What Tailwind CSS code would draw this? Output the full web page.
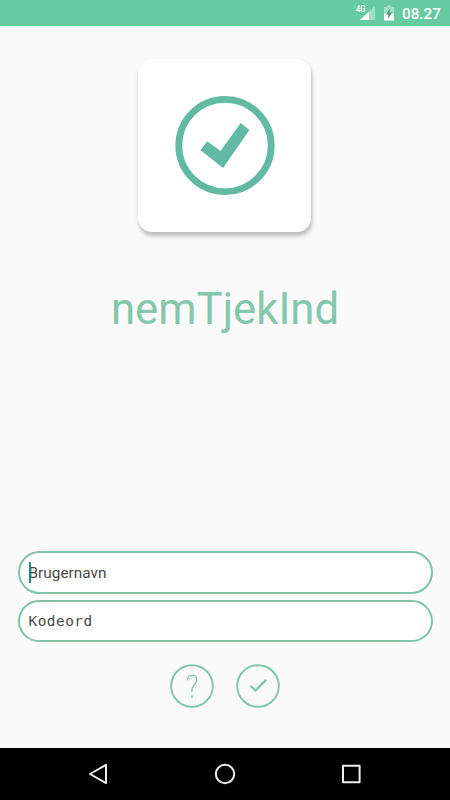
<!DOCTYPE html>
<html lang="da">
<head>
<meta charset="utf-8">
<title>nemTjekInd</title>
<script src="https://cdn.jsdelivr.net/npm/@tailwindcss/browser@4"></script>
</head>
<body class="bg-[#fafafa] font-['Roboto',sans-serif]">
<div class="flex h-[800px] w-[450px] flex-col overflow-hidden">
  <header class="flex h-[26px] shrink-0 justify-end bg-[#66cba2] pr-[9px]">
    <svg class="h-[26px] w-[45px]" viewBox="0 0 45 26">
      <path d="M20 6V20H5Z" fill="#fff" fill-opacity=".38"/>
      <path d="M14 11.5V20H5Z" fill="#fff"/>
      <text x="1" y="11.6" font-size="8.2" font-weight="500" fill="#fff" textLength="9.5" lengthAdjust="spacingAndGlyphs">4G</text>
      <path d="M32 5.5h4V7h3v6.5H29V7h3Z" fill="#fff" fill-opacity=".38"/>
      <path d="M29 13.5h10V20.5H29Z" fill="#fff"/>
      <path d="M34.8 8.2V12.6H37L33.3 19V14.6H31.2Z" fill="#4b9d7c"/>
    </svg>
    <span class="ml-[2px] flex h-[29px] w-[39px] items-center justify-end text-[15.3px] font-medium whitespace-nowrap text-white">08.27</span>
  </header>

  <main class="flex h-[722px] shrink-0 flex-col items-center">
    <div class="mt-[33px] ml-[-1px] flex h-[173px] w-[173px] shrink-0 items-center justify-center rounded-[14px] bg-[#fefefe] shadow-[1px_4px_4px_rgba(0,0,0,0.25),0_0_2px_rgba(0,0,0,0.06)]">
      <svg class="ml-[1.5px] size-[102px] blur-[0.5px]" viewBox="0 0 102 102">
        <circle cx="51" cy="50.5" r="46.2" fill="none" stroke="#63baa2" stroke-width="6.8"/>
        <path d="M26.4 55.3 33.2 46.2 46.5 56.1 66.7 28.1 75.4 35.1 49.1 72.9Z" fill="#63baa2"/>
      </svg>
    </div>
    <h1 class="mt-[51px] h-[52px] text-[43.7px] leading-[52px] text-[#84c7ad]">nemTjekInd</h1>

    <form class="mt-[216px] flex w-[415px] flex-col gap-[6px]">
      <div class="flex h-[42.5px] items-center rounded-full border-2 border-[#7fc3a8] bg-white pl-[9px] text-[15.4px] text-[#484848]">
        <span class="z-10 mr-[-2px] h-[21px] w-[2px] bg-[#26897b]"></span>
        <span class="pt-[2px]">Brugernavn</span>
      </div>
      <div class="flex h-[42.5px] items-center rounded-full border-2 border-[#7fc3a8] bg-white pt-[2px] pl-[9px] text-[14.4px] tracking-[0.5px] text-[#484848]" style="font-family:'DejaVu Sans Mono',monospace">Kodeord</div>
    </form>

    <div class="mt-[22px] flex gap-[22px]">
      <svg class="size-[44px]" viewBox="0 0 44 44" fill="none" stroke="#7fc7aa">
        <circle cx="22" cy="22" r="20.8" stroke-width="1.9"/>
        <path d="M17.6 16.2C17.6 13 19.2 11.4 22 11.4S26.7 13.3 26.7 16.1C26.7 20.5 21.9 21.3 21.9 26.4V28" stroke-width="1.4"/>
        <path d="M21.9 31.6v2.2" stroke-width="1.7"/>
      </svg>
      <svg class="size-[44px]" viewBox="0 0 44 44" fill="none" stroke="#7fc7aa">
        <circle cx="22" cy="22" r="20.8" stroke-width="1.9"/>
        <path d="M14.7 22.1 19.5 26.5 30.1 15.9" stroke-width="2.2"/>
      </svg>
    </div>
  </main>

  <nav class="flex h-[52px] shrink-0 items-center justify-between bg-black px-[87px]">
    <svg class="size-[24px]" viewBox="0 0 24 24" fill="none" stroke="#eee" stroke-width="2" stroke-linejoin="round"><path d="M3 12 19 2.9V21.1Z"/></svg>
    <svg class="size-[24px]" viewBox="0 0 24 24" fill="none" stroke="#eee" stroke-width="2"><circle cx="12" cy="12" r="9.2"/></svg>
    <svg class="size-[24px]" viewBox="0 0 24 24" fill="none" stroke="#eee" stroke-width="2" stroke-linejoin="round"><path d="M4 3.7H20.6V20.3H4Z"/></svg>
  </nav>
</div>
</body>
</html>
